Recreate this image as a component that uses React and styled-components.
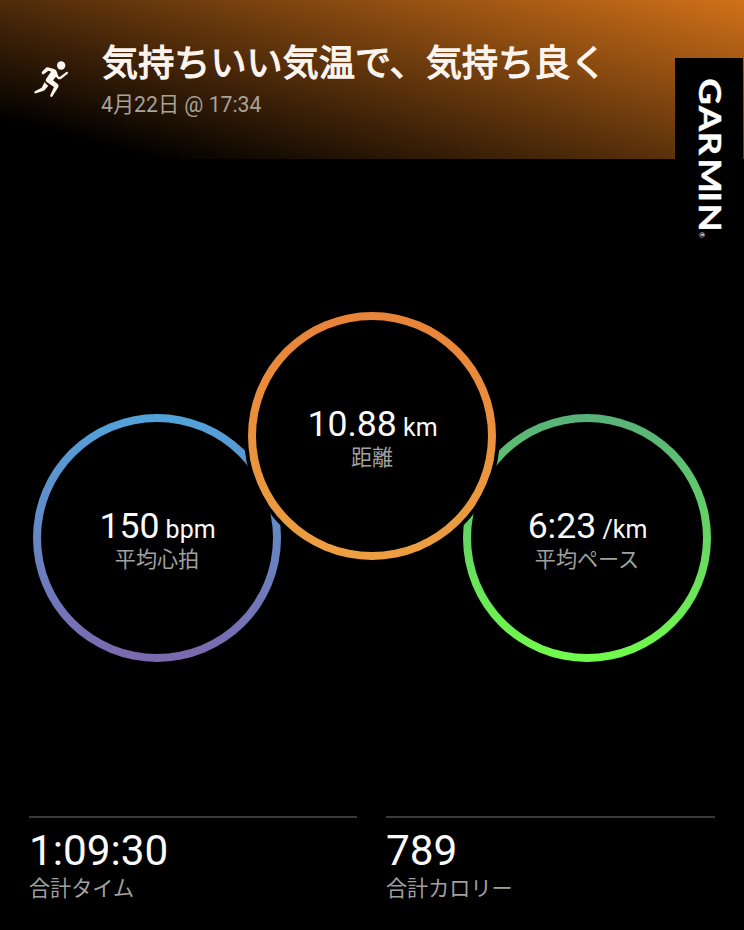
import React from "react";
import styled, { createGlobalStyle } from "styled-components";

const rings = [
  { value: "150", unit: "bpm", label: "平均心拍", from: "#52a3da", to: "#7b69ae" },
  { value: "10.88", unit: "km", label: "距離", from: "#e8833a", to: "#ec9f40", raised: true },
  { value: "6:23", unit: "/km", label: "平均ペース", from: "#58b27a", to: "#72fb4c" },
];

const totals = [
  { value: "1:09:30", label: "合計タイム" },
  { value: "789", label: "合計カロリー" },
];

const RunnerIcon = () => (
  <svg width="36" height="38" viewBox="0 0 108 114">
    <circle cx="81.5" cy="16.5" r="12.5" />
    <path d="M24 35 L36 23 Q38 21 41 22 L60 27 Q68 30 69 37 L73 49 Q76 52 80 49 L97 36 Q101 34 102 38 Q102 40 100 42 L82 56 Q76 60 71 56 L66 50 L57 61 L72 73 Q75 76 73 81 L56 108 Q53 113 50 110 Q48 108 49 105 L60 81 L38 66 Q33 62 36 57 L51 35 L43 32 L31 41 Q27 44 24 41 Q22 38 24 35 Z" />
    <path d="M32 66 Q36 74 43 77 L33 89 Q31 92 27 93 L6 100 Q2 101 1 98 Q0 95 4 93 L23 83 Z" />
  </svg>
);

const GarminLogo = () => (
  <svg width="68" height="200" viewBox="0 0 68 200">
    <g transform="translate(24 0) rotate(90) scale(1.2 1)">
      <text x="16.8 39.8 61.4 83.6 111 121.2" y="0">
        GARMIN
      </text>
    </g>
    <text className="mark" transform="translate(24 174) rotate(90)">
      ®
    </text>
  </svg>
);

const App = () => {
  return (
    <Page>
      <GlobalStyle />
      <Header>
        <RunnerIcon />
        <div>
          <Title>気持ちいい気温で、気持ち良く</Title>
          <DateText>4月22日 @ 17:34</DateText>
        </div>
        <Brand>
          <GarminLogo />
        </Brand>
      </Header>
      <Rings>
        {rings.map((ring) => (
          <Ring
            key={ring.label}
            $from={ring.from}
            $to={ring.to}
            $raised={ring.raised}
          >
            <RingValue>
              {ring.value}
              <Unit> {ring.unit}</Unit>
            </RingValue>
            <Label>{ring.label}</Label>
          </Ring>
        ))}
      </Rings>
      <Totals>
        {totals.map((total) => (
          <Total key={total.label}>
            <TotalValue>{total.value}</TotalValue>
            <Label>{total.label}</Label>
          </Total>
        ))}
      </Totals>
    </Page>
  );
};

const GlobalStyle = createGlobalStyle`
  * {
    box-sizing: border-box;
  }
  body {
    margin: 0;
    background: #000;
  }
`;

const Page = styled.main`
  display: flex;
  flex-direction: column;
  width: 744px;
  height: 930px;
  overflow: hidden;
  background: #000;
  color: #fafafa;
  font-family: Roboto, "Noto Sans CJK JP", sans-serif;
`;

const Header = styled.header`
  position: relative;
  display: flex;
  height: 159px;
  padding: 42px 0 0 34px;
  background: linear-gradient(194.5deg, #d07119, #000 302px);

  > svg {
    flex: none;
    margin: 18px 31px 0 0;
    fill: #fdf6f0;
  }
`;

const Title = styled.h1`
  margin: 0 0 0 1px;
  color: #fbf4ee;
  font-size: 36px;
  font-weight: 400;
  letter-spacing: 0.15px;
  line-height: 44px;
  white-space: nowrap;
  -webkit-text-stroke: 1.3px #fbf4ee;
`;

const DateText = styled.p`
  margin: 5px 0 0;
  color: #a8a29d;
  font-size: 21.2px;
  line-height: 28px;
`;

const Brand = styled.div`
  position: absolute;
  top: 58px;
  right: 1px;
  width: 68px;
  height: 200px;
  background: #000;

  text {
    fill: #fff;
    stroke: #fff;
    stroke-width: 0.4px;
    font-family: Lato, sans-serif;
    font-size: 30.5px;
    font-weight: 700;
  }
  .mark {
    stroke: none;
    font-size: 7px;
    font-weight: 400;
  }
`;

const Rings = styled.section`
  display: flex;
  align-items: flex-end;
  justify-content: center;
  height: 503px;
`;

const Ring = styled.div`
  display: flex;
  flex: none;
  flex-direction: column;
  align-items: center;
  width: 248px;
  height: 248px;
  padding-top: 83px;
  border: 8px solid transparent;
  border-radius: 50%;
  background: linear-gradient(#000, #000) padding-box,
    linear-gradient(${(props) => props.$from}, ${(props) => props.$to}) border-box;
  ${(props) =>
    props.$raised &&
    `
    z-index: 1;
    margin: 0 -33px 102px;
    box-shadow: 0 0 0 4px #000;
  `}
`;

const RingValue = styled.div`
  height: 42px;
  padding-left: 1px;
  font-size: 35.6px;
  line-height: 42px;
`;

const Unit = styled.span`
  font-size: 25px;
`;

const Label = styled.div`
  color: #a0a0a0;
  font-size: 21.1px;
  line-height: 26px;
`;

const Totals = styled.section`
  display: grid;
  grid-template-columns: 328px 329px;
  gap: 29px;
  margin: 154px 0 0 29px;
`;

const Total = styled.div`
  border-top: 2px solid #3a3a3a;
  padding-top: 8px;
`;

const TotalValue = styled.div`
  font-size: 42.3px;
  line-height: 50px;
`;

export default App;
